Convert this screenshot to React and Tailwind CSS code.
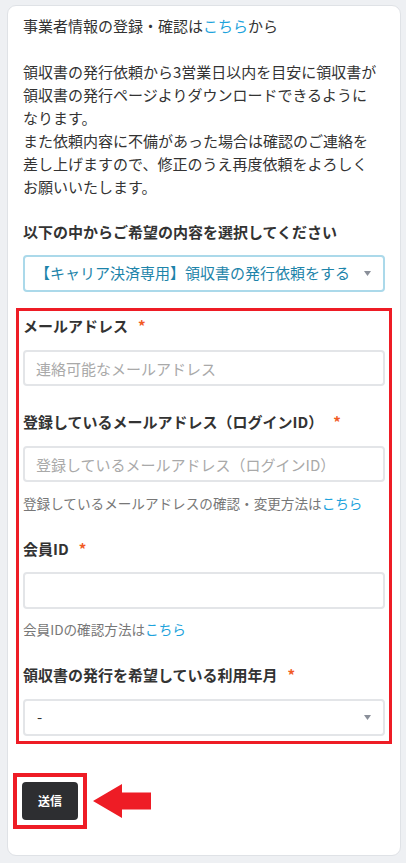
import React from "react";

const font = {
  fontFamily: '"Noto Sans CJK JP", "Noto Sans", sans-serif',
};

function Label({ children }) {
  return (
    <div className="flex items-center text-[15px] leading-[23px] font-bold text-[#333]">
      <span>{children}</span>
      <span className="ml-[10px] text-[#f15a24]">*</span>
    </div>
  );
}

function Arrow() {
  return (
    <svg width="7" height="5" viewBox="0 0 7 5" className="shrink-0">
      <path d="M0 0 H7 L3.5 5 Z" fill="#8a8f99" />
    </svg>
  );
}

export default function App() {
  return (
    <div className="min-h-[863px] bg-[#eef0f3] pt-[5px] pl-[7px]" style={font}>
      <div className="w-[394px] h-[851px] bg-white border border-[#dfe2e6] rounded-[9px] px-[15px] pt-[8px]">
        <p className="text-[15px] leading-[23px] text-[#333]">
          事業者情報の登録・確認は<span className="text-[#1ea3dc]">こちら</span>から
          <br />
          <br />
          領収書の発行依頼から3営業日以内を目安に領収書が
          <br />
          領収書の発行ページよりダウンロードできるように
          <br />
          なります。
          <br />
          また依頼内容に不備があった場合は確認のご連絡を
          <br />
          差し上げますので、修正のうえ再度依頼をよろしく
          <br />
          お願いいたします。
        </p>

        <div className="mt-[22px] text-[15px] leading-[23px] font-bold text-[#333]">
          以下の中からご希望の内容を選択してください
        </div>

        <div className="mt-[12px] h-[37px] border-2 border-[#abd9ea] rounded-[4px] flex items-center justify-between pl-[10px] pr-[12px]">
          <span className="text-[15px] text-[#1d84aa]">
            【キャリア決済専用】領収書の発行依頼をする
          </span>
          <Arrow />
        </div>

        <div className="mt-[16px] -mx-[7px] border-[3px] border-[#ee1c25] px-[4px] pt-[3px] pb-[5px]">
          <Label>メールアドレス</Label>
          <input
            className="mt-[13px] w-full h-[36px] border-2 border-[#e3e5e8] rounded-[4px] px-[11px] text-[15px] outline-none placeholder:text-[#a9a9a9]"
            placeholder="連絡可能なメールアドレス"
          />

          <div className="mt-[24px]">
            <div className="flex items-center text-[15px] leading-[23px] font-bold text-[#333]">
              <span>登録しているメールアドレス（ログインID）</span>
              <span className="ml-[10px] text-[#f15a24]">*</span>
            </div>
          </div>
          <input
            className="mt-[13px] w-full h-[36px] border-2 border-[#e3e5e8] rounded-[4px] px-[11px] text-[15px] outline-none placeholder:text-[#a9a9a9]"
            placeholder="登録しているメールアドレス（ログインID）"
          />
          <div className="mt-[11px] text-[13.6px] leading-[21px] text-[#777]">
            登録しているメールアドレスの確認・変更方法は
            <span className="text-[#1ea3dc]">こちら</span>
          </div>

          <div className="mt-[23px]">
            <Label>会員ID</Label>
          </div>
          <input className="mt-[12px] w-full h-[37px] border-2 border-[#e3e5e8] rounded-[4px] px-[11px] text-[15px] outline-none" />
          <div className="mt-[10px] text-[13.6px] leading-[21px] text-[#777]">
            会員IDの確認方法は<span className="text-[#1ea3dc]">こちら</span>
          </div>

          <div className="mt-[23px]">
            <Label>領収書の発行を希望している利用年月</Label>
          </div>
          <div className="mt-[13px] h-[37px] border-2 border-[#e3e5e8] rounded-[4px] flex items-center justify-between pl-[12px] pr-[12px]">
            <span className="text-[15px] text-[#333]">-</span>
            <Arrow />
          </div>
        </div>

        <div className="mt-[29px] flex items-center">
          <div className="-ml-[10px] border-[4px] border-[#ee1c25] p-[5px]">
            <button className="w-[56px] h-[38px] bg-[#2d2e31] rounded-[4px] text-white text-[12px] font-bold">
              送信
            </button>
          </div>
          <svg width="58" height="36" viewBox="0 0 58 36" className="ml-[6px]">
            <path d="M0 18 L29 1 V9.5 H58 V26.5 H29 V35 Z" fill="#ee1c25" />
          </svg>
        </div>
      </div>
    </div>
  );
}
